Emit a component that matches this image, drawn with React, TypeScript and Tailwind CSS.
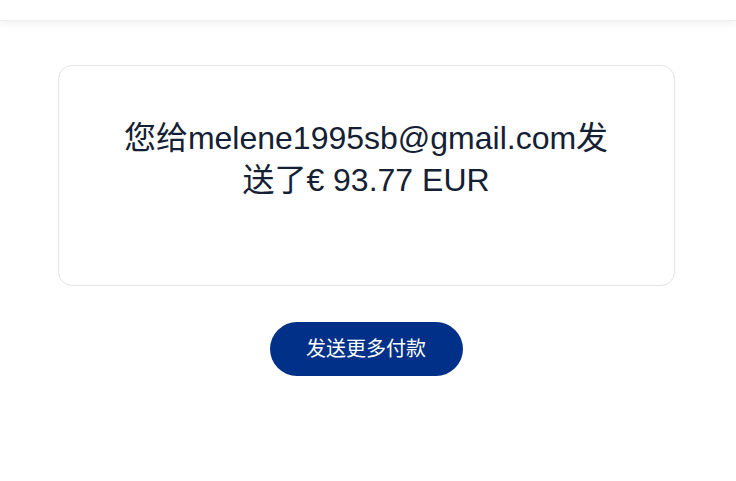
export default function App() {
  return (
    <div
      className="min-h-screen bg-white"
      style={{ fontFamily: '"Liberation Sans", Arial, "Noto Sans CJK SC", sans-serif' }}
    >
      <div className="h-[21px] bg-white shadow-[0_2px_8px_rgba(0,0,0,0.07)] border-b border-[#f0f0f0]" />

      <main className="flex flex-col items-center pt-[44px] pr-[4px]">
        <div className="w-[617px] h-[221px] rounded-[14px] border border-[#e3e3e3] bg-white flex justify-center pt-[51px]">
          <h1 className="w-[495px] text-center text-[32px] leading-[42px] text-[#142033]">
            您给melene1995sb@gmail.com发送了€ 93.77 EUR
          </h1>
        </div>

        <button className="mt-[36px] w-[193px] h-[54px] rounded-full bg-[#003087] text-white text-[20px]">
          发送更多付款
        </button>
      </main>
    </div>
  );
}
